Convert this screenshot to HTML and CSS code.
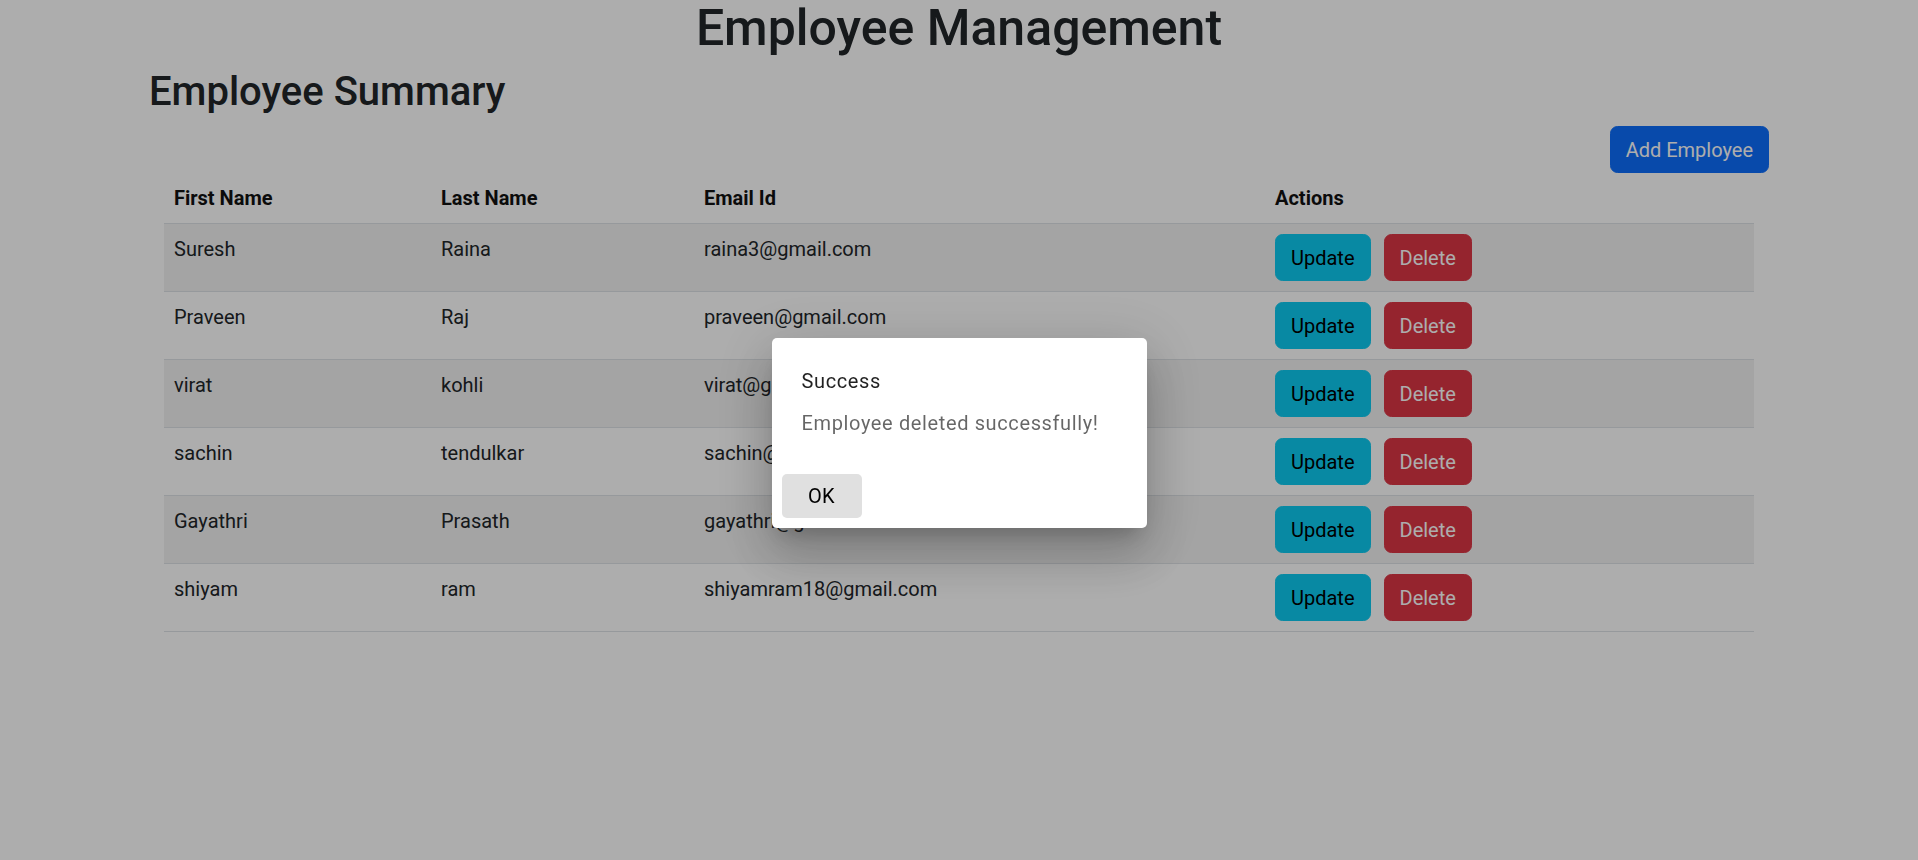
FILE: index.html
```html
<!DOCTYPE html>
<html lang="en">
<head>
<meta charset="utf-8">
<title>Employee Management</title>
<link rel="stylesheet" href="styles.css">
</head>
<body>
  <div class="page">
    <h1 class="title">Employee Management</h1>
    <div class="container">
      <h2 class="summary">Employee Summary</h2>
      <div class="toolbar">
        <button class="btn btn-primary">Add Employee</button>
      </div>
      <div class="inner">
        <table class="table">
          <colgroup>
            <col class="c1"><col class="c2"><col class="c3"><col class="c4">
          </colgroup>
          <thead>
            <tr><th>First Name</th><th>Last Name</th><th>Email Id</th><th>Actions</th></tr>
          </thead>
          <tbody>
            <tr><td>Suresh</td><td>Raina</td><td>raina3@gmail.com</td><td><button class="btn btn-info">Update</button><button class="btn btn-danger">Delete</button></td></tr>
            <tr><td>Praveen</td><td>Raj</td><td>praveen@gmail.com</td><td><button class="btn btn-info">Update</button><button class="btn btn-danger">Delete</button></td></tr>
            <tr><td>virat</td><td>kohli</td><td>virat@gmail.com</td><td><button class="btn btn-info">Update</button><button class="btn btn-danger">Delete</button></td></tr>
            <tr><td>sachin</td><td>tendulkar</td><td>sachin@gmail.com</td><td><button class="btn btn-info">Update</button><button class="btn btn-danger">Delete</button></td></tr>
            <tr><td>Gayathri</td><td>Prasath</td><td>gayathri@gmail.com</td><td><button class="btn btn-info">Update</button><button class="btn btn-danger">Delete</button></td></tr>
            <tr><td>shiyam</td><td>ram</td><td>shiyamram18@gmail.com</td><td><button class="btn btn-info">Update</button><button class="btn btn-danger">Delete</button></td></tr>
          </tbody>
        </table>
      </div>
    </div>
  </div>

  <div class="backdrop"></div>
  <div class="overlay-pane">
    <div class="dialog" role="dialog">
      <div class="dialog-body">
        <h2 class="dialog-title">Success</h2>
        <p class="dialog-message">Employee deleted successfully!</p>
      </div>
      <div class="dialog-actions">
        <button class="dialog-btn">OK</button>
      </div>
    </div>
  </div>
</body>
</html>
```

FILE: styles.css
```css
* { box-sizing: border-box; }

html, body {
  margin: 0;
  padding: 0;
}

body {
  font-family: Roboto, "Liberation Sans", Arial, sans-serif;
  font-size: 20px;
  line-height: 30px;
  color: #212529;
  background: #ffffff;
}

.page {
  width: 100%;
}

.title {
  margin: -2px 0 0;
  font-size: 50px;
  font-weight: 500;
  line-height: 60px;
  text-align: center;
  color: #212529;
}

.container {
  width: 100%;
  max-width: 1650px;
  margin: 0 auto;
  padding: 0 15px;
}

.summary {
  margin: 10px 0 10px;
  font-size: 40px;
  font-weight: 500;
  line-height: 48px;
  color: #212529;
}

.toolbar {
  display: flex;
  justify-content: flex-end;
}

.inner {
  padding: 0 15px;
}

.btn {
  display: inline-block;
  font-family: inherit;
  font-size: 20px;
  font-weight: 400;
  line-height: 30px;
  padding: 7.5px 15px;
  border: 1px solid transparent;
  border-radius: 7.5px;
  cursor: pointer;
  vertical-align: middle;
}

.btn-primary {
  background: #0d6efd;
  border-color: #0d6efd;
  color: #ffffff;
}

.btn-info {
  background: #0dcaf0;
  border-color: #0dcaf0;
  color: #000000;
}

.btn-danger {
  background: #dc3545;
  border-color: #dc3545;
  color: #ffffff;
  margin-left: 13px;
}

.table {
  width: 100%;
  border-collapse: collapse;
  table-layout: fixed;
  color: #212529;
}

.c1 { width: 267px; }
.c2 { width: 263px; }
.c3 { width: 571px; }

.table th,
.table td {
  padding: 10px;
  text-align: left;
  vertical-align: top;
  border-bottom: 1px solid #dee2e6;
  line-height: 30px;
}

.table th {
  font-weight: 700;
  color: #111111;
}

.table tbody tr:nth-child(odd) td {
  background: #f2f2f2;
}

.backdrop {
  position: fixed;
  inset: 0;
  background: rgba(0, 0, 0, 0.32);
}

.overlay-pane {
  position: fixed;
  inset: 0;
  display: flex;
  align-items: center;
  justify-content: center;
  padding-top: 5px;
}

.dialog {
  width: 375px;
  background: #ffffff;
  border-radius: 5px;
  box-shadow:
    0 14px 19px -9px rgba(0, 0, 0, 0.2),
    0 30px 48px 4px rgba(0, 0, 0, 0.14),
    0 11px 58px 10px rgba(0, 0, 0, 0.12);
}

.dialog-body {
  padding: 28px 30px 0;
}

.dialog-title {
  margin: 0;
  font-size: 20px;
  font-weight: 400;
  line-height: 30px;
  letter-spacing: 0.625px;
  color: rgba(0, 0, 0, 0.87);
}

.dialog-message {
  margin: 12px 0 0;
  font-size: 20px;
  line-height: 30px;
  letter-spacing: 0.625px;
  color: rgba(0, 0, 0, 0.6);
}

.dialog-actions {
  display: flex;
  padding: 36px 10px 10px;
}

.dialog-btn {
  min-width: 80px;
  height: 44px;
  padding: 0 20px;
  border: none;
  border-radius: 5px;
  background: #e0e0e0;
  color: #000000;
  font-family: inherit;
  font-size: 20px;
  line-height: 44px;
  letter-spacing: 0.3px;
  cursor: pointer;
}
```
